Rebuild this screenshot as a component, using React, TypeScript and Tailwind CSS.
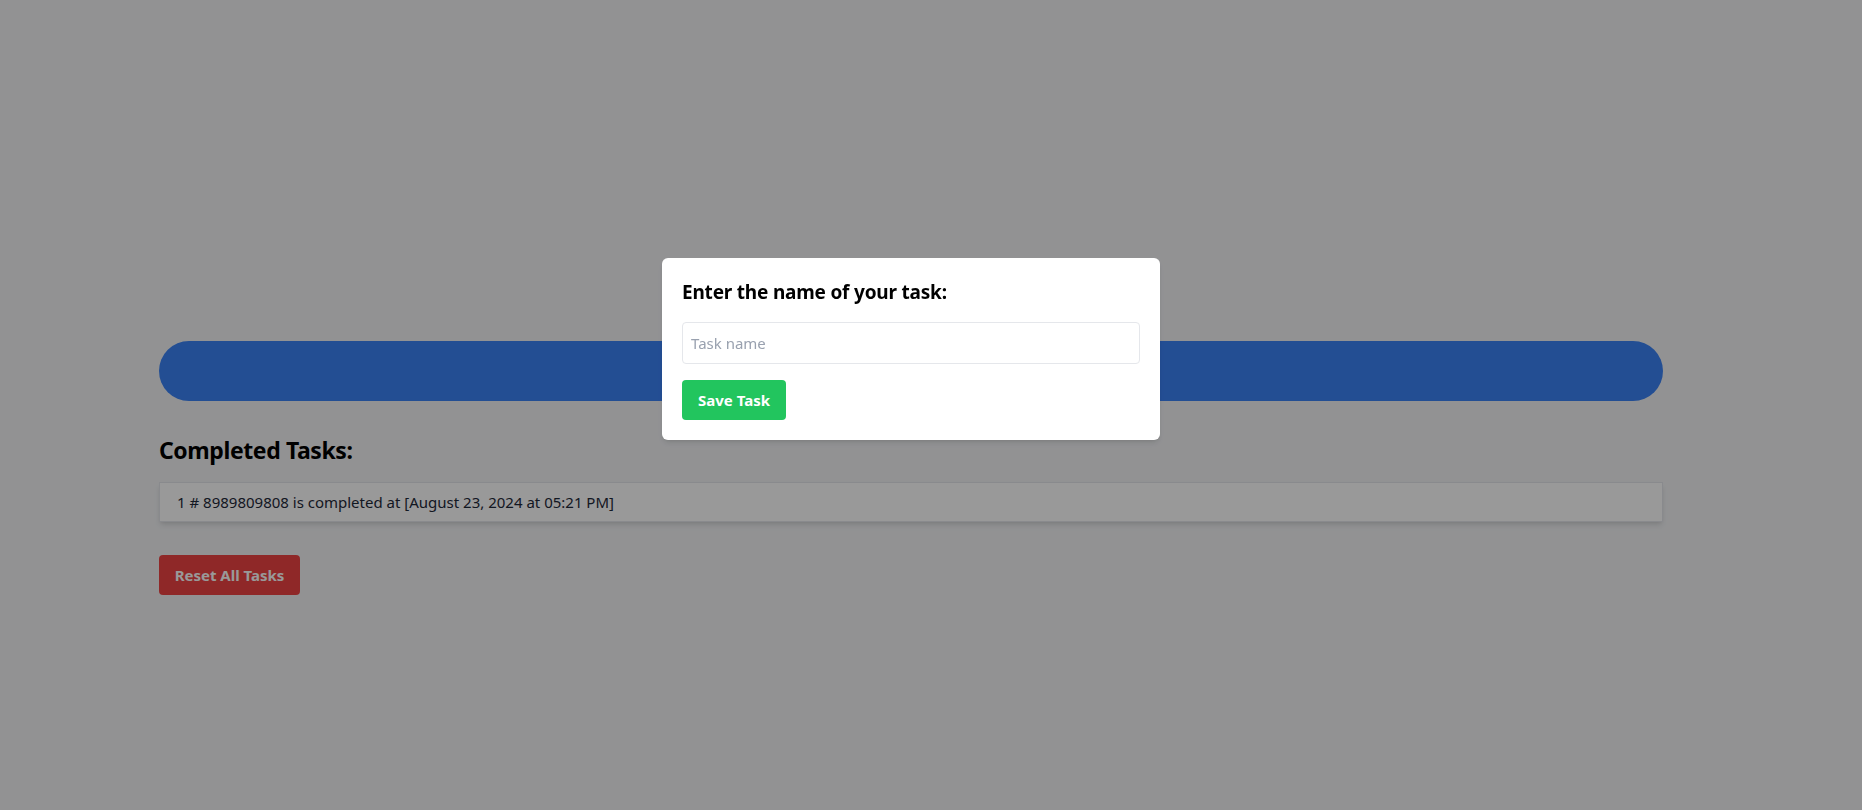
import { useState } from "react";

export default function App() {
    const [taskName, setTaskName] = useState("");

    return (
        <div className="relative min-h-[810px] w-full bg-[#f3f4f6]" style={{ fontFamily: '"Noto Sans", Arial, sans-serif' }}>
            {/* Page content */}
            <div className="pl-[159px] pt-[341px] w-[1663px]">
                <div className="h-[60px] w-full rounded-full bg-[#3b82f6]" />

                <h2 className="mt-[33px] mb-4 text-[23px] leading-8 tracking-[-0.4px] font-bold text-black">Completed Tasks:</h2>

                <ul>
                    <li className="h-10 flex items-center px-[17px] bg-white border border-gray-200 shadow-md text-[15px] text-gray-800">
                        1 # 8989809808 is completed at [August 23, 2024 at 05:21 PM]
                    </li>
                </ul>

                <button className="mt-[33px] h-10 w-[141px] rounded bg-[#ef4444] text-white font-bold text-[15px]">
                    Reset All Tasks
                </button>
            </div>

            {/* Modal overlay */}
            <div className="fixed inset-0 bg-black/40">
                <div className="absolute left-[662px] top-[258px] w-[498px] bg-white rounded-md shadow-md p-5">
                    <h3 className="text-[19px] leading-7 tracking-[-0.2px] font-bold text-black mb-4">Enter the name of your task:</h3>
                    <input
                        type="text"
                        value={taskName}
                        onChange={(e) => setTaskName(e.target.value)}
                        placeholder="Task name"
                        className="w-full h-[42px] px-2 border border-gray-200 rounded text-[15px] text-gray-800 placeholder:text-gray-400 outline-none mb-4"
                    />
                    <button className="h-10 w-[104px] rounded bg-[#22c55e] text-white font-bold text-[15px]">Save Task</button>
                </div>
            </div>
        </div>
    );
}
